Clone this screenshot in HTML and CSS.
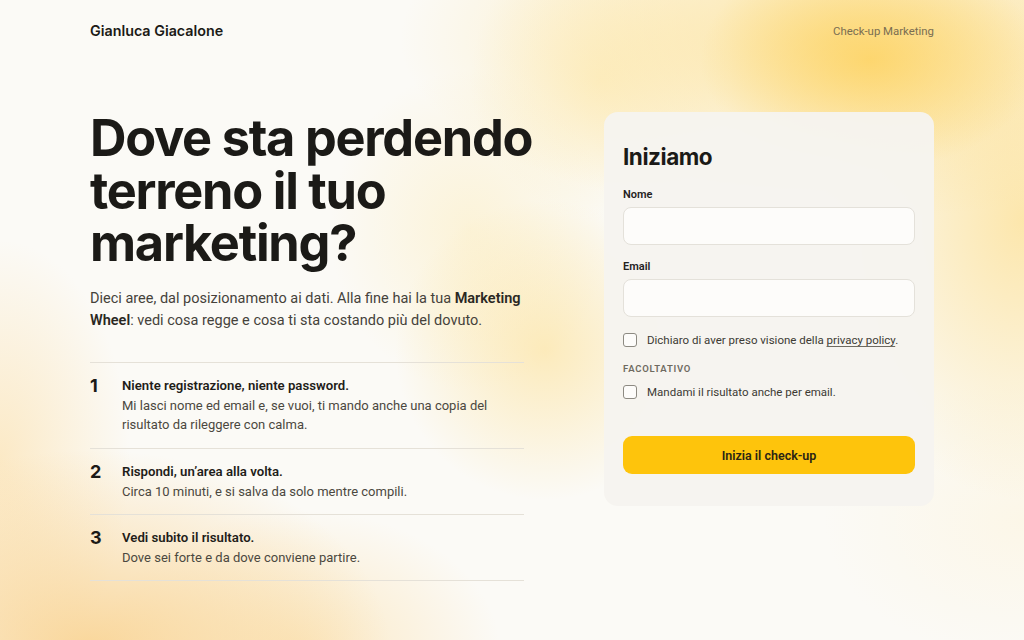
FILE: index.html
```html
<!DOCTYPE html>
<html lang="it">
<head>
<meta charset="utf-8">
<title>Check-up Marketing</title>
<link rel="stylesheet" href="styles.css">
</head>
<body>
<div class="bg"></div>
<div class="page">
  <header class="top">
    <div class="brand">Gianluca Giacalone</div>
    <div class="tag">Check-up Marketing</div>
  </header>
  <main class="main">
    <section class="intro">
      <h1 class="title">Dove sta perdendo terreno il tuo marketing?</h1>
      <p class="lead">Dieci aree, dal posizionamento ai dati. Alla fine hai la tua <strong>Marketing</strong> <strong>Wheel</strong>: vedi cosa regge e cosa ti sta costando più del dovuto.</p>
      <ol class="steps">
        <li class="step">
          <span class="num">1</span>
          <div class="step-body">
            <div class="step-title">Niente registrazione, niente password.</div>
            <div class="step-desc">Mi lasci nome ed email e, se vuoi, ti mando anche una copia del risultato da rileggere con calma.</div>
          </div>
        </li>
        <li class="step">
          <span class="num">2</span>
          <div class="step-body">
            <div class="step-title">Rispondi, un’area alla volta.</div>
            <div class="step-desc">Circa 10 minuti, e si salva da solo mentre compili.</div>
          </div>
        </li>
        <li class="step">
          <span class="num">3</span>
          <div class="step-body">
            <div class="step-title">Vedi subito il risultato.</div>
            <div class="step-desc">Dove sei forte e da dove conviene partire.</div>
          </div>
        </li>
      </ol>
    </section>
    <form class="card">
      <h2 class="card-title">Iniziamo</h2>
      <label class="field-label" for="nome">Nome</label>
      <input class="field" id="nome" type="text">
      <label class="field-label" for="email">Email</label>
      <input class="field" id="email" type="email">
      <label class="check check-privacy"><span class="box"></span><span>Dichiaro di aver preso visione della <u class="link">privacy policy</u>.</span></label>
      <div class="optional">FACOLTATIVO</div>
      <label class="check"><span class="box"></span><span>Mandami il risultato anche per email.</span></label>
      <button class="btn" type="button">Inizia il check-up</button>
    </form>
  </main>
</div>
</body>
</html>
```

FILE: styles.css
```css
* { box-sizing: border-box; }
html, body { margin: 0; padding: 0; }
body {
  width: 1024px;
  height: 640px;
  overflow: hidden;
  background: #fbfaf6;
  font-family: Roboto, "Noto Sans", sans-serif;
  color: #1b1a17;
  position: relative;
}
.bg {
  position: absolute;
  inset: 0;
  background:
    radial-gradient(ellipse 170px 110px at 870px 60px, rgba(253, 210, 95, 0.8), rgba(253, 210, 95, 0) 100%),
    radial-gradient(ellipse 440px 180px at 840px 40px, rgba(253, 224, 145, 0.8), rgba(253, 224, 145, 0) 100%),
    radial-gradient(ellipse 200px 280px at 1024px 220px, rgba(253, 222, 140, 0.7), rgba(253, 222, 140, 0) 100%),
    radial-gradient(ellipse 130px 140px at 600px 80px, rgba(254, 236, 185, 0.6), rgba(254, 236, 185, 0) 100%),
    radial-gradient(ellipse 150px 150px at 545px 350px, rgba(253, 222, 140, 0.55), rgba(253, 222, 140, 0) 100%),
    radial-gradient(ellipse 140px 160px at 470px 230px, rgba(253, 232, 170, 0.4), rgba(253, 232, 170, 0) 100%),
    radial-gradient(ellipse 300px 200px at 90px 650px, rgba(249, 205, 130, 0.8), rgba(249, 205, 130, 0) 100%),
    radial-gradient(ellipse 200px 140px at 300px 650px, rgba(251, 215, 145, 0.5), rgba(251, 215, 145, 0) 100%),
    radial-gradient(ellipse 130px 220px at 0px 460px, rgba(252, 222, 165, 0.6), rgba(252, 222, 165, 0) 100%),
    radial-gradient(ellipse 200px 140px at 1024px 520px, rgba(254, 240, 205, 0.35), rgba(254, 240, 205, 0) 100%);
}
.page {
  position: relative;
  width: 844px;
  margin: 0 auto;
  padding-top: 21px;
}
.top {
  display: flex;
  justify-content: space-between;
  align-items: center;
  height: 18px;
}
.brand {
  font-family: Inter, sans-serif;
  font-weight: 600;
  font-size: 14.3px;
  color: #1b1a17;
}
.tag {
  font-size: 11.4px;
  color: #7a6e52;
  padding-top: 2px;
}
.main {
  display: flex;
  gap: 80px;
  align-items: flex-start;
  margin-top: 73px;
}
.intro { width: 434px; }
.title {
  width: 470px;
  font-family: Inter, sans-serif;
  font-weight: 700;
  font-size: 50.5px;
  line-height: 52.5px;
  letter-spacing: -0.025em;
  margin: 0;
  color: #1b1a17;
}
.lead {
  margin: 18px 0 0;
  font-size: 14.5px;
  line-height: 22px;
  color: #45423b;
}
.lead strong { font-weight: 600; color: #2a2823; }
.steps {
  list-style: none;
  margin: 30px 0 0;
  padding: 0;
  border-top: 1px solid #e5e1d8;
}
.step {
  display: flex;
  padding: 13px 0 13px;
  border-bottom: 1px solid #e5e1d8;
}
.step:last-child { padding-bottom: 12px; }
.num {
  width: 32px;
  flex: none;
  font-family: Inter, sans-serif;
  font-weight: 700;
  font-size: 18px;
  line-height: 20px;
  color: #1b1a17;
}
.step-title {
  font-weight: 600;
  font-size: 13.2px;
  line-height: 19px;
  color: #1f1d19;
}
.step-desc {
  font-size: 13px;
  line-height: 19.5px;
  color: #4b4840;
  margin-top: 1px;
}
.card {
  width: 330px;
  background: rgba(246, 244, 239, 0.96);
  border-radius: 14px;
  padding: 31px 19px 32px;
  display: flex;
  flex-direction: column;
}
.card-title {
  font-family: Inter, sans-serif;
  font-weight: 700;
  font-size: 22.5px;
  letter-spacing: -0.02em;
  line-height: 28px;
  margin: 0;
  color: #1b1a17;
}
.field-label {
  font-weight: 600;
  font-size: 11px;
  line-height: 16px;
  margin-top: 16px;
  color: #24221e;
}
.field {
  margin-top: 4px;
  height: 38px;
  width: 292px;
  border: 1px solid #e4e1da;
  border-radius: 8px;
  background: #fdfcfa;
  font: inherit;
}
.field + .field-label { margin-top: 14px; }
.check {
  display: flex;
  align-items: center;
  gap: 10px;
  font-size: 11.5px;
  line-height: 16px;
  color: #3c3a34;
}
.check-privacy { margin-top: 15px; }
.box {
  width: 14px;
  height: 14px;
  border: 1px solid #8d8a82;
  border-radius: 3px;
  background: #fdfcfa;
  flex: none;
}
.link { text-decoration-color: #6e6a60; text-underline-offset: 2px; }
.optional {
  margin-top: 14px;
  font-size: 9.5px;
  font-weight: 600;
  letter-spacing: 0.08em;
  color: #6e6a60;
  line-height: 14px;
}
.optional + .check { margin-top: 8px; }
.btn {
  margin-top: 36px;
  height: 38px;
  width: 292px;
  border: none;
  border-radius: 9px;
  background: #fec40c;
  font-family: Roboto, sans-serif;
  font-weight: 600;
  font-size: 12.5px;
  color: #2a2414;
  cursor: pointer;
}
```
